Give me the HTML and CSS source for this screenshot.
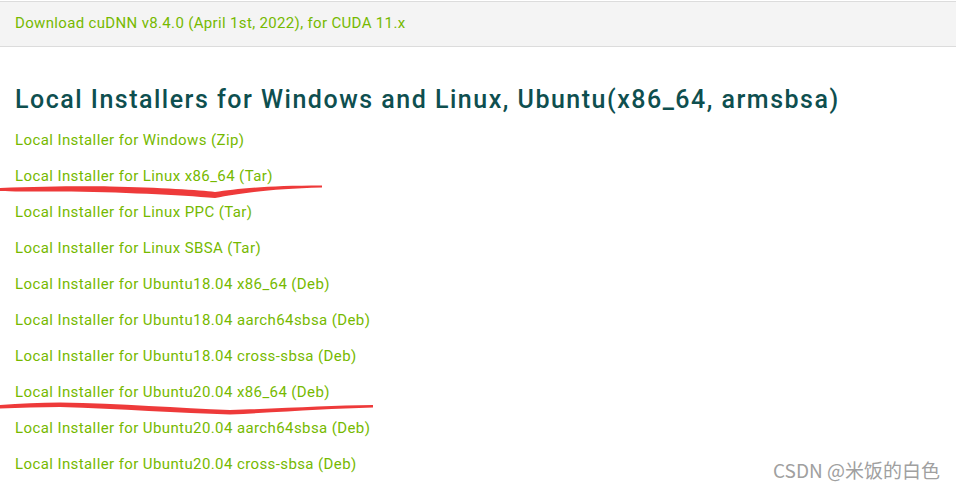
FILE: index.html
```html
<!DOCTYPE html>
<html lang="en">
<head>
<meta charset="utf-8">
<title>cuDNN Download</title>
<link rel="stylesheet" href="styles.css">
</head>
<body>
<div class="page">
  <div class="bar"><a class="bar-link" href="#">Download cuDNN v8.4.0 (April 1st, 2022), for CUDA 11.x</a></div>
  <h2 class="title">Local Installers for Windows and Linux, Ubuntu(x86_64, armsbsa)</h2>
  <ul class="links">
    <li><a href="#">Local Installer for Windows (Zip)</a></li>
    <li><a href="#">Local Installer for Linux x86_64 (Tar)</a></li>
    <li><a href="#">Local Installer for Linux PPC (Tar)</a></li>
    <li><a href="#">Local Installer for Linux SBSA (Tar)</a></li>
    <li><a href="#">Local Installer for Ubuntu18.04 x86_64 (Deb)</a></li>
    <li><a href="#">Local Installer for Ubuntu18.04 aarch64sbsa (Deb)</a></li>
    <li><a href="#">Local Installer for Ubuntu18.04 cross-sbsa (Deb)</a></li>
    <li><a href="#">Local Installer for Ubuntu20.04 x86_64 (Deb)</a></li>
    <li><a href="#">Local Installer for Ubuntu20.04 aarch64sbsa (Deb)</a></li>
    <li><a href="#">Local Installer for Ubuntu20.04 cross-sbsa (Deb)</a></li>
  </ul>
  <svg class="marks" width="956" height="490" viewBox="0 0 956 490">
    <path d="M0 188 C40 186.5 80 186 110 186.5 C160 187.5 200 190 215 192 C235 189 265 185.5 322 185.5 L322 187.5 C270 189 240 193 215 198 C180 195 120 192 60 191.5 C30 191.5 10 191.5 0 191 Z" fill="#ee3a3a"/>
    <path d="M0 405 C20 403.5 40 402.5 60 402.5 C120 403.5 180 408 230 410 C290 408 330 405.5 373 405 L373 407.5 C330 408.5 290 411.5 230 414.5 C180 413 120 409 60 407 C40 407 20 407.5 0 408.5 Z" fill="#ee3a3a"/>
  </svg>
  <div class="watermark">CSDN @米饭的白色</div>
</div>
</body>
</html>
```
FILE: styles.css
```css
html, body {
  margin: 0;
  padding: 0;
  background: #ffffff;
}
.page {
  position: relative;
  width: 956px;
  height: 490px;
  overflow: hidden;
  font-family: "Roboto", "Liberation Sans", sans-serif;
}
.bar {
  margin-top: 1px;
  background: #f4f4f4;
  border-top: 1px solid #dcdcdc;
  border-bottom: 1px solid #dcdcdc;
  display: flex;
  align-items: center;
  padding-left: 15px;
  padding-bottom: 2px;
  box-sizing: border-box;
  height: 46px;
}
.bar-link {
  color: #76b900;
  text-decoration: none;
  font-size: 15px;
  letter-spacing: 0.34px;
}
.title {
  margin: 36px 0 0 15px;
  font-size: 25px;
  font-weight: 500;
  letter-spacing: 1.5px;
  color: #0e4f4f;
  line-height: 34px;
}
.links {
  list-style: none;
  margin: 5px 0 0 15px;
  padding: 0;
  display: flex;
  flex-direction: column;
}
.links li {
  height: 36px;
  line-height: 36px;
}
.links a {
  color: #76b900;
  text-decoration: none;
  font-size: 15px;
  letter-spacing: 0.4px;
}
.marks {
  position: absolute;
  left: 0;
  top: 0;
  pointer-events: none;
}
.watermark {
  position: absolute;
  right: 16px;
  bottom: 7px;
  font-family: "Noto Sans CJK SC", sans-serif;
  font-size: 19px;
  color: #a0a0a0;
  text-shadow: 0 0 1px #fff;
}
```
